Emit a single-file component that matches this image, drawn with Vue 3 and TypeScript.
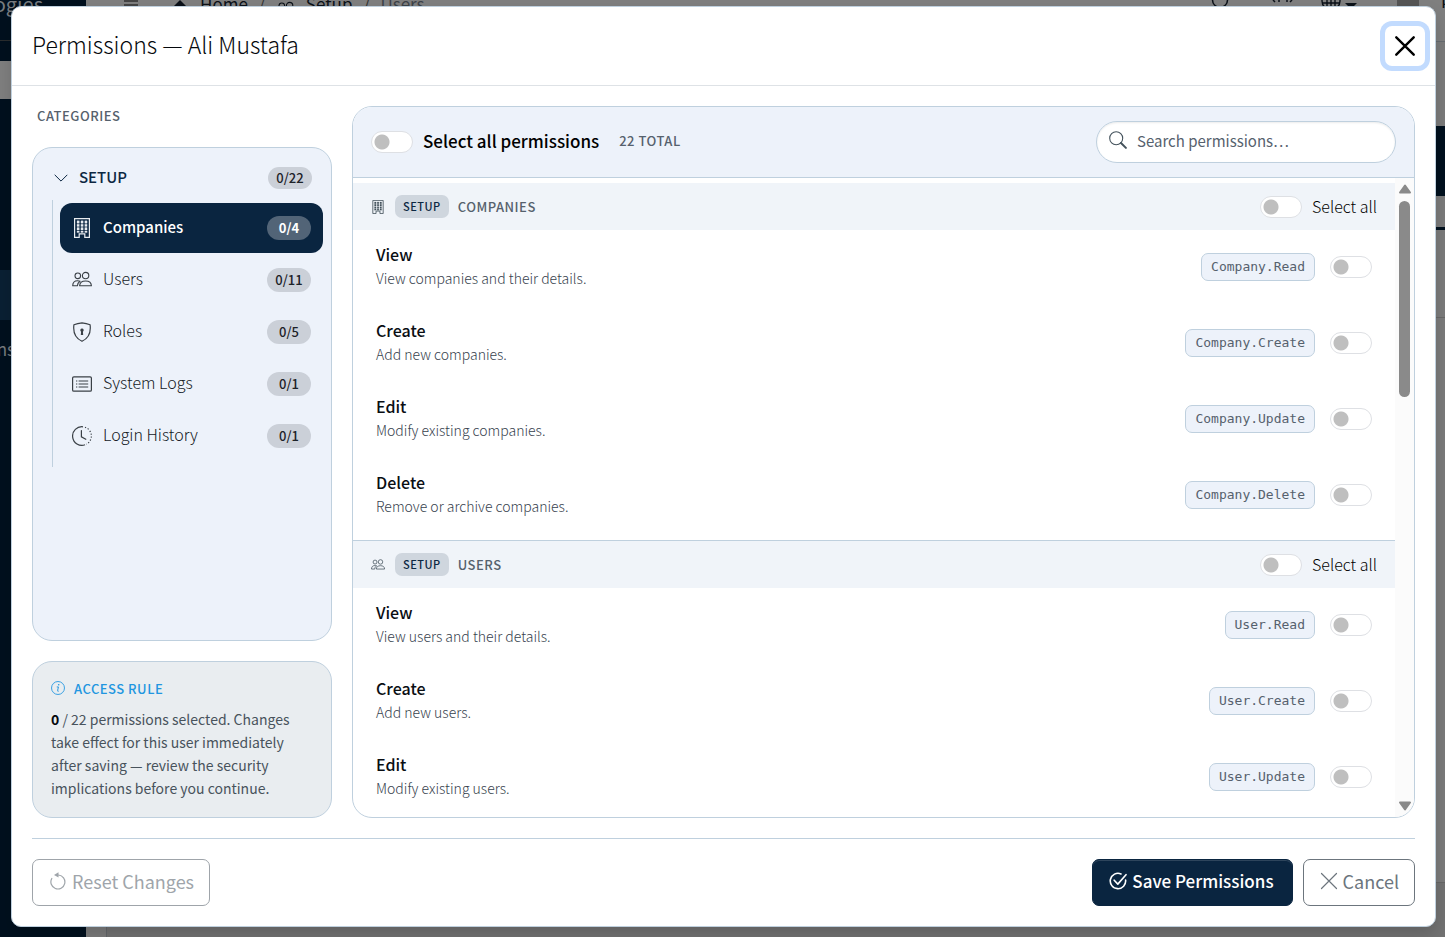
<template>
  <svg class="sprite" aria-hidden="true">
    <symbol id="i-building" viewBox="0 0 20 20">
      <path d="M2.6.6h14.8v18.8h-4.6v-3.6H7.2v3.6H2.6z" fill="none" stroke="currentColor" stroke-width="1.2" />
      <path d="M5 2.8h2.3v2.4H5zM8.9 2.8h2.3v2.4H8.9zM12.8 2.8h2.3v2.4h-2.3zM5 6.2h2.3v2.4H5zM8.9 6.2h2.3v2.4H8.9zM12.8 6.2h2.3v2.4h-2.3zM5 9.6h2.3V12H5zM8.9 9.6h2.3V12H8.9zM12.8 9.6h2.3V12h-2.3zM5 13h2.3v1.6H5zM8.9 13h2.3v1.6H8.9zM12.8 13h2.3v1.6h-2.3z" fill="currentColor" stroke="currentColor" stroke-width=".3" />
    </symbol>
    <symbol id="i-users" viewBox="0 0 20 20">
      <g fill="none" stroke="currentColor" stroke-width="1.1" stroke-linejoin="round">
        <circle cx="5.8" cy="5.800" r="2.8" />
        <circle cx="13.6" cy="5.600" r="3.2" />
        <path d="M7.6 15.800c.2-3.2 2.400-4.800 6-4.800s5.700 1.600 5.800 4.800zM5.400 15.800H.7c.1-3.200 1.700-5 4.900-5 .9 0 1.800.1 2.400.4-1.600 1-2.400 2.200-2.600 4.600z" />
      </g>
    </symbol>
    <symbol id="i-shield" viewBox="0 0 20 20">
      <path d="M10 .8C7.400 1.100 4.600 1.700 1.900 2.800 1 9.800 3.600 16.200 10 19.300c6.400-3.100 9-9.500 8.100-16.500C15.400 1.700 12.600 1.100 10 .8z" fill="none" stroke="currentColor" stroke-width="1.200" />
      <path d="M10 6.500a1.800 1.800 0 0 1 .9 3.300l.3 3.200H8.800l.3-3.200a1.800 1.800 0 0 1 .9-3.300z" fill="currentColor" />
    </symbol>
    <symbol id="i-list" viewBox="0 0 20 20">
      <rect x=".6" y="2.800" width="18.800" height="14.400" rx="1.300" fill="none" stroke="currentColor" stroke-width="1.200" />
      <path d="M4 7h1.300M4 10h1.300M4 13h1.300M6.600 7h9.600M6.600 10h9.600M6.600 13h9.600" stroke="currentColor" stroke-width="1.100" />
    </symbol>
    <symbol id="i-history" viewBox="0 0 20 20">
      <g fill="none" stroke="currentColor" stroke-width="1.200">
        <path d="M11 .8A9.300 9.300 0 1 0 13 18.800" />
        <path d="M13 1.200a9.300 9.300 0 0 1 1.500 17" stroke-dasharray="1.200 1.800" />
        <path d="M9.400 4.500v6.300l4.400 2.500" stroke-linecap="round" />
      </g>
    </symbol>
    <symbol id="i-chevron" viewBox="0 0 14 14">
      <path d="M.7 3.800 7 10.100l6.300-6.300" fill="none" stroke="currentColor" />
    </symbol>
    <symbol id="i-info" viewBox="0 0 16 16">
      <circle cx="8" cy="8" r="7.400" fill="none" stroke="currentColor" />
      <path d="M6.600 6.800h1.900l-1 4.200q-.2 1 1.300.6" fill="none" stroke="currentColor" stroke-width="1.100" />
      <circle cx="8.800" cy="4.300" r=".9" fill="currentColor" />
    </symbol>
    <symbol id="i-search" viewBox="0 0 18 18">
      <circle cx="7.200" cy="7.200" r="6.500" fill="none" stroke="currentColor" stroke-width="1.100" />
      <path d="m12 12 4.900 4.900" stroke="currentColor" stroke-width="2" stroke-linecap="round" />
    </symbol>
    <symbol id="i-reset" viewBox="0 0 18 18">
      <path d="M9.500 3a7 7 0 1 1-6.700 3.500" fill="none" stroke="currentColor" stroke-width="1.200" stroke-linecap="round" />
      <path d="M9.500.2v5.400L5 2.900z" fill="currentColor" />
    </symbol>
    <symbol id="i-check" viewBox="0 0 18 18">
      <g fill="none" stroke="currentColor" stroke-width="1.600" stroke-linecap="round" stroke-linejoin="round">
        <path d="M12 1.900A7.700 7.700 0 1 0 16.600 8" />
        <path d="m5.200 8.200 3.600 3.900L17 2.700" />
      </g>
    </symbol>
    <symbol id="i-x" viewBox="0 0 18 18">
      <path d="m1.500 1.500 15 15m0-15-15 15" stroke="currentColor" stroke-width="1.200" stroke-linecap="round" />
    </symbol>
    <symbol id="i-close" viewBox="0 0 20 20">
      <path d="m1.300 1.300 17.400 17.400m0-17.400L1.300 18.700" stroke="currentColor" stroke-width="2.400" stroke-linecap="round" />
    </symbol>
  </svg>

  <div class="page" aria-hidden="true">
    <div class="side">
      <div class="brand"><span>Technologies</span></div>
      <div class="side-band"></div>
      <div class="side-active"></div>
      <div class="side-item"><span>Options</span></div>
    </div>
    <div class="main">
      <div class="topbar">
        <svg class="burger" viewBox="0 0 14 14"><path d="M0 1h14M0 5h14M0 9h14" stroke="currentColor" stroke-width="1.500" /></svg>
        <svg class="top-home" viewBox="0 0 16 16"><path d="M8 0 0 8h2v7h12V8h2z" fill="currentColor" /></svg>
        <span>Home</span><span class="slash">/</span>
        <svg class="top-users"><use href="#i-users" /></svg>
        <span>Setup</span><span class="slash">/</span><span class="muted">Users</span>
        <span class="spacer"></span>
        <svg class="top-icon" viewBox="0 0 18 18"><circle cx="9" cy="0" r="7.500" fill="none" stroke="currentColor" stroke-width="1.500" /></svg>
        <svg class="top-icon sun" viewBox="0 0 24 18"><path d="m1 0 2 2m4-2v2m8-2v2m5-2-2 2" stroke="currentColor" stroke-width="1.500" /></svg>
        <svg class="top-globe" viewBox="0 0 20 20"><path d="M10-8a9 9 0 1 0 0 18 9 9 0 0 0 0-18zM6-7v16m8-16v16M10-8v18M1 3h18" fill="none" stroke="currentColor" stroke-width="1.400" /></svg>
        <svg class="top-caret" viewBox="0 0 12 6"><path d="M0 0h12L6 6z" fill="currentColor" /></svg>
        <span class="avatar"></span>
        <span class="edge">H</span>
      </div>
      <div class="gap-a"></div>
      <div class="navy"></div>
      <div class="gap-b"></div>
      <div class="sheet"></div>
      <div class="foot"></div>
    </div>
  </div>

  <div class="overlay">
    <section class="modal" role="dialog" aria-modal="true" aria-labelledby="dlg-title">
      <header class="modal-head">
        <h1 id="dlg-title">Permissions — Ali Mustafa</h1>
        <button class="close" type="button" aria-label="Close"><svg><use href="#i-close" /></svg></button>
      </header>

      <div class="modal-body">
        <aside class="left">
          <h2 class="caption">Categories</h2>
          <nav class="tree" aria-label="Categories">
            <button class="tree-root" type="button">
              <svg class="chev"><use href="#i-chevron" /></svg>
              <span class="grow">SETUP</span>
              <span class="count">0/22</span>
            </button>
            <div class="tree-items">
              <button
                v-for="c in categories"
                :key="c.name"
                type="button"
                class="tree-item"
                :class="{ active: c.name === current }"
                @click="current = c.name"
              >
                <svg><use :href="'#i-' + c.icon" /></svg>
                <span class="grow">{{ c.name }}</span>
                <span class="count">0/{{ c.total }}</span>
              </button>
            </div>
          </nav>
          <div class="rule">
            <h3><svg><use href="#i-info" /></svg>ACCESS RULE</h3>
            <p><strong>0</strong> / 22 permissions selected. Changes take effect for this user immediately after saving — review the security implications before you continue.</p>
          </div>
        </aside>

        <div class="panel">
          <div class="panel-head">
            <input id="all" class="switch" type="checkbox" />
            <label for="all" class="all-label">Select all permissions</label>
            <span class="total">22 TOTAL</span>
            <div class="search">
              <svg><use href="#i-search" /></svg>
              <input type="text" aria-label="Search permissions" placeholder="Search permissions…" />
            </div>
          </div>
          <div class="scroller">
            <div class="list">
              <section v-for="g in groups" :key="g.name" class="group">
                <div class="group-head">
                  <svg><use :href="'#i-' + g.icon" /></svg>
                  <span class="tag">SETUP</span>
                  <h3 class="grow">{{ g.name }}</h3>
                  <input :id="'g-' + g.name" class="switch" type="checkbox" />
                  <label :for="'g-' + g.name">Select all</label>
                </div>
                <div class="rows">
                  <div v-for="p in g.items" :key="p.code" class="row">
                    <label class="text" :for="p.code">
                      <span class="name">{{ p.name }}</span>
                      <span class="desc">{{ p.desc }}</span>
                    </label>
                    <code>{{ p.code }}</code>
                    <input :id="p.code" class="switch" type="checkbox" />
                  </div>
                </div>
              </section>
            </div>
            <div class="bar" aria-hidden="true">
              <svg viewBox="0 0 12 10"><path d="M6 1.500 11 8.500H1z" fill="currentColor" stroke="currentColor" stroke-width="2" stroke-linejoin="round" /></svg>
              <div class="track"><div class="thumb"></div></div>
              <svg viewBox="0 0 12 10"><path d="M6 8.500 11 1.500H1z" fill="currentColor" stroke="currentColor" stroke-width="2" stroke-linejoin="round" /></svg>
            </div>
          </div>
        </div>
      </div>

      <footer class="modal-foot">
        <button class="btn reset" type="button" disabled><svg><use href="#i-reset" /></svg>Reset Changes</button>
        <span class="spacer"></span>
        <button class="btn save" type="button"><svg><use href="#i-check" /></svg>Save Permissions</button>
        <button class="btn" type="button"><svg><use href="#i-x" /></svg>Cancel</button>
      </footer>
    </section>
  </div>
</template>

<script setup lang="ts">
import { ref } from 'vue'

interface Category { name: string; icon: string; total: number }
interface Permission { name: string; desc: string; code: string }
interface Group { name: string; icon: string; items: Permission[] }

const current = ref<string>('Companies')

const categories: Category[] = [
  { name: 'Companies', icon: 'building', total: 4 },
  { name: 'Users', icon: 'users', total: 11 },
  { name: 'Roles', icon: 'shield', total: 5 },
  { name: 'System Logs', icon: 'list', total: 1 },
  { name: 'Login History', icon: 'history', total: 1 },
]

const groups: Group[] = [
  {
    name: 'COMPANIES',
    icon: 'building',
    items: [
      { name: 'View', desc: 'View companies and their details.', code: 'Company.Read' },
      { name: 'Create', desc: 'Add new companies.', code: 'Company.Create' },
      { name: 'Edit', desc: 'Modify existing companies.', code: 'Company.Update' },
      { name: 'Delete', desc: 'Remove or archive companies.', code: 'Company.Delete' },
    ],
  },
  {
    name: 'USERS',
    icon: 'users',
    items: [
      { name: 'View', desc: 'View users and their details.', code: 'User.Read' },
      { name: 'Create', desc: 'Add new users.', code: 'User.Create' },
      { name: 'Edit', desc: 'Modify existing users.', code: 'User.Update' },
    ],
  },
]
</script>

<style>
body {
  margin: 0;
  overflow: hidden;
  font-family: "Noto Sans CJK SC", "Open Sans", sans-serif;
}
</style>

<style scoped>
* { box-sizing: border-box; }
h1, h2, h3, p { margin: 0; font-weight: inherit; }
button, input { font: inherit; color: inherit; }
button { background: none; border: 0; padding: 0; text-align: left; }
svg { display: block; flex: none; }
.sprite { position: absolute; width: 0; height: 0; }
.spacer { flex: 1; }
.grow { flex: 1; min-width: 0; }

/* page behind the dialog */
.page { position: fixed; inset: 0; display: grid; grid-template-columns: 86px 1fr; background: #7b7b7b; }
.side { background: #01101e; color: #777b7f; overflow: hidden; }
.brand { height: 41px; width: 43px; display: flex; justify-content: flex-end; border-bottom: 1px solid #2a2d2e; font-size: 20px; line-height: 8px; overflow: hidden; }
.side-band { margin-top: 20px; height: 38px; background: #7f7f7f; }
.side-active { margin-top: 171px; height: 50px; background: #0a2033; }
.side-item { width: 15px; height: 58px; display: flex; justify-content: flex-end; line-height: 58px; font-size: 17px; overflow: hidden; }
.main { display: flex; flex-direction: column; min-width: 0; }
.topbar { flex: none; height: 42px; display: flex; align-items: flex-start; border-bottom: 1px solid #666b70; background: #7f7f7f; padding-left: 38px; font-size: 17px; line-height: 8px; color: #0b1118; overflow: hidden; }
.burger { width: 14px; height: 14px; margin-right: 33px; color: #333; }
.top-home { width: 18px; height: 16px; margin-right: 11px; }
.slash { width: 28px; text-align: center; color: #333; }
.top-users { width: 20px; height: 20px; margin-right: 10px; }
.muted { color: #3c4248; }
.top-icon { width: 18px; height: 18px; margin-right: 43px; }
.sun { width: 24px; margin-right: 25px; }
.top-globe { width: 20px; height: 20px; margin-right: 4px; }
.top-caret { width: 12px; height: 6px; margin-top: 3px; }
.avatar { width: 22px; height: 20px; margin: 0 22px 0 40px; background: #555; }
.edge { width: 4px; overflow: hidden; }
.gap-a { flex: none; height: 84px; }
.navy { flex: none; height: 70px; background: #01101e; }
.gap-b { flex: none; height: 31px; }
.sheet { flex: 1; margin-left: 20px; border-top: 3px solid #01101e; border-left: 1px solid #666b70; background: linear-gradient(#686868, #686868) 0 87px / 100% 1px no-repeat; }
.foot { flex: none; height: 55px; margin-left: 20px; border-top: 1px solid #666; border-left: 1px solid #63666a; background: #727272; }

/* dialog */
.overlay { position: fixed; inset: 0; display: flex; padding: 6px 9px 10px 11px; font-size: 15px; color: #111820; }
.modal { flex: 1; min-width: 0; display: flex; flex-direction: column; background: #fff; border: 1px solid #bfd0de; border-radius: 10px; box-shadow: 0 8px 16px rgba(0, 0, 0, 0.15); overflow: hidden; }
.modal-head { flex: none; height: 79px; display: flex; align-items: center; justify-content: space-between; padding: 0 10px 0 20px; border-bottom: 1px solid #dee2e6; }
h1 { padding-bottom: 4px; font-size: 23px; font-weight: 300; line-height: 32px; color: #05080c; }
.close { width: 40px; height: 40px; display: grid; place-items: center; border-radius: 7px; box-shadow: 0 0 0 5px #c2dbfe; color: #000; outline: 0; }
.close svg { width: 20px; height: 20px; }
.modal-body { flex: 1; min-height: 0; display: grid; grid-template-columns: 300px 1fr; gap: 20px; padding: 20px; }
.left { display: flex; flex-direction: column; min-height: 0; }
.caption { padding-left: 5px; height: 41px; font-size: 13px; line-height: 20px; font-weight: 500; letter-spacing: 0.5px; text-transform: uppercase; color: #56616d; }
.tree { flex: 1; min-height: 0; border: 1px solid #bfd0de; border-radius: 20px; background: #edf2fa; padding: 15px 8px; }
.tree .grow { padding-bottom: 4px; }
.tree-root { width: 100%; height: 30px; display: flex; align-items: center; gap: 11px; padding: 0 11px 0 13px; font-weight: 500; color: #0c2742; }
.chev { width: 14px; height: 14px; }
.count { width: 44px; height: 22px; border-radius: 12px; background: #cbd0d8; text-align: center; font-size: 13px; line-height: 22px; font-weight: 500; color: #1d2228; }
.tree-items { margin: 7px 0 0 11px; padding: 3px 0 6px 7px; border-left: 1px solid #bfd0de; display: flex; flex-direction: column; gap: 2px; }
.tree-item { height: 50px; display: flex; align-items: center; gap: 11px; padding: 0 12px; border-radius: 12px; font-size: 16px; font-weight: 300; color: #14191e; }
.tree-item svg { width: 20px; height: 20px; color: #3a4046; }
.tree-item .count { height: 24px; line-height: 24px; }
.tree-item.active { background: #0a2540; color: #fff; font-size: 15px; font-weight: 500; }
.tree-item.active svg { color: #e8ecf0; }
.tree-item.active .count { background: #526477; color: #fff; font-weight: 700; }
.rule { flex: none; margin-top: 20px; padding: 16px 18px 17px; border: 1px solid #bfd0de; border-radius: 20px; background: #e9edf0; color: #48535c; font-size: 14px; line-height: 23px; }
.rule h3 { display: flex; align-items: center; gap: 9px; height: 20px; margin-bottom: 10px; font-size: 13px; font-weight: 500; letter-spacing: 0.5px; color: #2196e0; }
.rule h3 svg { width: 14px; height: 14px; }
.rule strong { color: #05080c; }

.panel { min-width: 0; min-height: 0; display: flex; flex-direction: column; border: 1px solid #bfd0de; border-radius: 20px; overflow: hidden; background: #fff; }
.panel-head { flex: none; height: 71px; display: flex; align-items: center; padding: 0 18px; border-bottom: 1px solid #bfd0de; background: #edf2fa; }
.switch { appearance: none; flex: none; width: 42px; height: 22px; margin: 0; border: 1px solid #dee0e4; border-radius: 11px; background: radial-gradient(circle at 10px 10px, #bfbfbf 7px, #fff 8px); }
.switch:checked { border-color: #0a2540; background: radial-gradient(circle at 30px 10px, #fff 7px, #0a2540 8px); }
.all-label { margin: 0 20px 0 10px; padding-bottom: 4px; font-size: 17px; font-weight: 500; color: #000; }
.total { padding-bottom: 4px; font-size: 13px; font-weight: 500; letter-spacing: 0.5px; color: #56616d; }
.search { width: 300px; height: 42px; margin-left: auto; display: flex; align-items: center; gap: 10px; padding: 0 12px 4px; border: 1px solid #bfd0de; border-radius: 21px; background: #fff; box-shadow: inset 0 1px 2px rgba(0, 0, 0, 0.08); color: #44525c; }
.search svg { width: 18px; height: 18px; }
.search input { flex: 1; min-width: 0; border: 0; padding: 0; outline: 0; background: none; font-size: 15px; }
.search input::placeholder { color: #56616d; opacity: 1; }
.scroller { flex: 1; min-height: 0; display: grid; grid-template-columns: 1fr 19px; }
.list { min-height: 0; overflow: hidden; padding-top: 5px; }
.group + .group { border-top: 1px solid #bfd0de; }
.group-head { height: 47px; display: flex; align-items: center; padding: 0 18px; background: #f0f4f9; }
.group-head svg { width: 14px; height: 14px; color: #44525c; }
.group-head h3 { font-size: 13px; font-weight: 500; letter-spacing: 0.5px; color: #56616d; }
.group-head label { margin-left: 10px; padding-bottom: 2px; font-size: 16px; font-weight: 300; color: #000; }
.tag { margin: 0 9px 0 10px; height: 23px; padding: 0 8px; border-radius: 7px; background: #cfd6de; font-size: 11px; line-height: 23px; font-weight: 500; letter-spacing: 0.5px; color: #0c2742; }
.rows { display: flex; flex-direction: column; gap: 2px; padding: 0 23px 8px; }
.row { height: 74px; display: flex; align-items: center; gap: 15px; }
.text { flex: 1; min-width: 0; display: flex; flex-direction: column; padding-bottom: 2px; line-height: 24px; }
.name { font-size: 16px; font-weight: 500; color: #0a0e13; }
.desc { font-size: 14px; font-weight: 300; color: #37424e; }
code { height: 28px; padding: 0 9px; border: 1px solid #bfd0de; border-radius: 7px; background: #edf2fa; font-family: "DejaVu Sans Mono", monospace; font-size: 13px; line-height: 26px; color: #56616d; }
.bar { display: flex; flex-direction: column; align-items: center; gap: 7px; padding: 6px 0; background: #fbfbfb; color: #8a8a8a; }
.bar svg { width: 12px; height: 10px; }
.track { flex: 1; width: 11px; }
.thumb { height: 33%; border-radius: 6px; background: #8a8a8a; }

.modal-foot { flex: none; display: flex; align-items: center; gap: 10px; margin: 0 20px; padding: 20px 0; border-top: 1px solid #bfd0de; }
.btn { height: 47px; display: flex; align-items: center; gap: 5px; padding: 0 15px 4px 16px; border: 1px solid #6c757d; border-radius: 7px; font-size: 18px; line-height: 26px; color: #6c757d; white-space: nowrap; }
.btn svg { width: 18px; height: 18px; }
.reset { opacity: 0.65; }
.save { padding-right: 18px; border-color: #0a2540; background: #0a2540; color: #fff; font-size: 17px; font-weight: 500; box-shadow: inset 0 1px 0 rgba(255, 255, 255, 0.15); }
</style>
